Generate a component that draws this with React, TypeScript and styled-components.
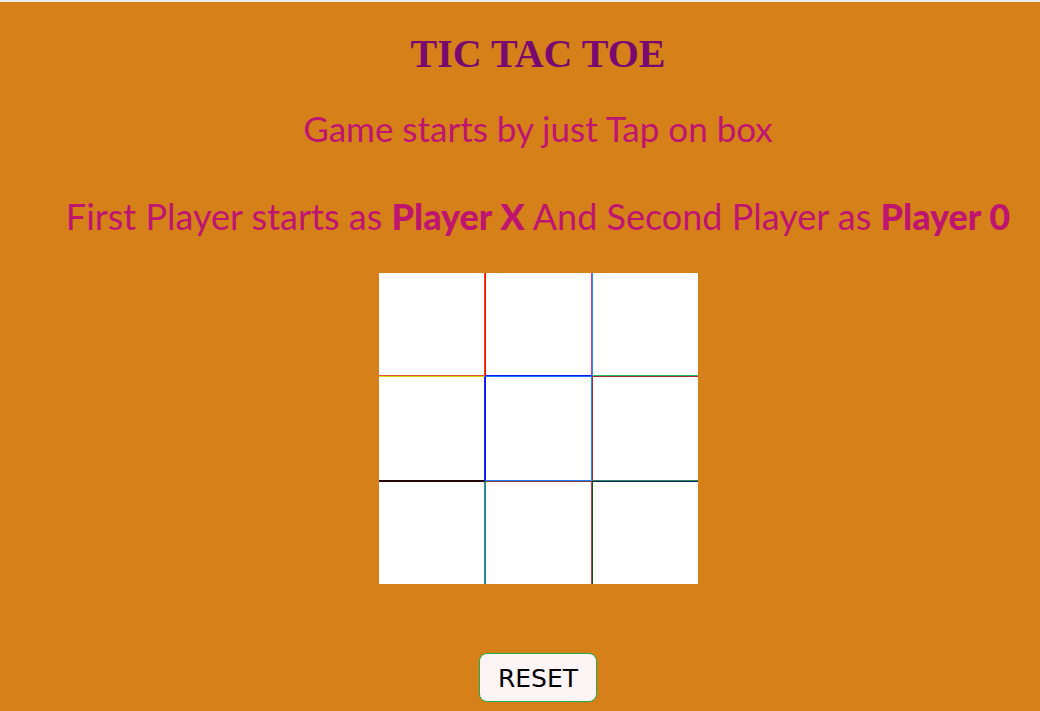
import React from "react";
import styled, { createGlobalStyle } from "styled-components";

const GlobalStyle = createGlobalStyle`
  html, body {
    margin: 0;
    padding: 0;
    background: #d68019;
  }
`;

const Page = styled.div`
  min-height: 100vh;
  box-sizing: border-box;
  border-top: 2px solid #ececec;
  background: #d68019;
  padding-left: 36px;
  display: flex;
  flex-direction: column;
  align-items: center;
`;

const Title = styled.h1`
  margin: 30px 0 0;
  font-family: "Liberation Serif", "Times New Roman", serif;
  font-weight: bold;
  font-size: 40px;
  line-height: 44px;
  color: #780a6f;
`;

const Line = styled.p<{ $gap: number; $size: number }>`
  margin: ${(p) => p.$gap}px 0 0;
  font-family: Lato, "Noto Sans", sans-serif;
  font-size: ${(p) => p.$size}px;
  line-height: 44px;
  color: #be1571;
  white-space: nowrap;

  b {
    font-weight: 900;
  }
`;

const Board = styled.div`
  margin-top: 35px;
  display: grid;
  grid-template-columns: 106px 107px 106px;
  grid-template-rows: 103px 105px 103px;
`;

type Sides = { t?: string; r?: string; b?: string; l?: string };

const Cell = styled.div<{ $s: Sides }>`
  box-sizing: border-box;
  background: #ffffff;
  cursor: pointer;
  border-top: ${(p) => (p.$s.t ? `1px solid ${p.$s.t}` : "none")};
  border-right: ${(p) => (p.$s.r ? `1px solid ${p.$s.r}` : "none")};
  border-bottom: ${(p) => (p.$s.b ? `1px solid ${p.$s.b}` : "none")};
  border-left: ${(p) => (p.$s.l ? `1px solid ${p.$s.l}` : "none")};
`;

const ResetButton = styled.button`
  margin-top: 69px;
  box-sizing: border-box;
  width: 118px;
  height: 49px;
  padding: 2px 0 0;
  background: #fdf4f6;
  border: 1px solid #1fae4c;
  border-radius: 8px;
  font-family: "DejaVu Sans", Verdana, sans-serif;
  font-size: 25px;
  color: #000;
  cursor: pointer;
`;

const cells: Sides[] = [
  { r: "#f04a1e", b: "#e8503c" },
  { l: "#ff0000", r: "#c838b8", b: "#0a1cf0" },
  { l: "#1e90ff", b: "#18c060" },
  { t: "#d8d800", r: "#2020ff", b: "#1a0a0a" },
  { t: "#1e70ff", l: "#1010ff", r: "#1e90ff", b: "#1e80ff" },
  { t: "#a52a2a", l: "#a52a2a", b: "#2e8b57" },
  { t: "#300000", r: "#1e88d0" },
  { t: "#8b3a2a", l: "#2e8b57", r: "#c04060" },
  { t: "#1a1a60", l: "#0a5a0a" },
];

export default function App() {
  return (
    <>
      <GlobalStyle />
      <Page>
        <Title>TIC TAC TOE</Title>
        <Line $gap={30} $size={35}>
          Game starts by just Tap on box
        </Line>
        <Line $gap={44} $size={36}>
          First Player starts as <b>Player X</b> And Second Player as <b>Player 0</b>
        </Line>
        <Board>
          {cells.map((s, i) => (
            <Cell key={i} $s={s} />
          ))}
        </Board>
        <ResetButton>RESET</ResetButton>
      </Page>
    </>
  );
}
